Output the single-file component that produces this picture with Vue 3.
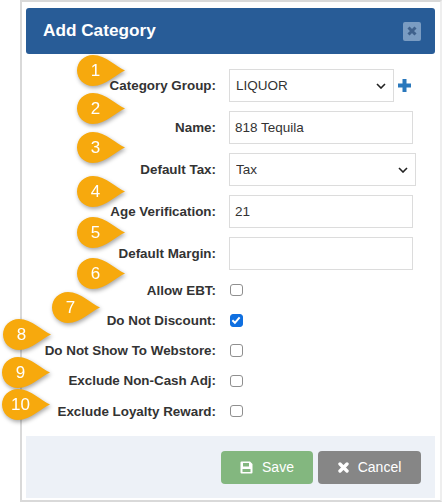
<script setup>
import { ref } from "vue";

const categoryGroup = ref("LIQUOR");
const name = ref("818 Tequila");
const defaultTax = ref("Tax");
const ageVerification = ref("21");
const defaultMargin = ref("");

const checks = ref([
  { label: "Allow EBT:", checked: false },
  { label: "Do Not Discount:", checked: true },
  { label: "Do Not Show To Webstore:", checked: false },
  { label: "Exclude Non-Cash Adj:", checked: false },
  { label: "Exclude Loyalty Reward:", checked: false },
]);

const callouts = [
  { n: 1, x: 75, y: 53 },
  { n: 2, x: 75, y: 91 },
  { n: 3, x: 75, y: 130 },
  { n: 4, x: 75, y: 174 },
  { n: 5, x: 75, y: 215 },
  { n: 6, x: 75, y: 256 },
  { n: 7, x: 50, y: 290 },
  { n: 8, x: 1, y: 317 },
  { n: 9, x: 0, y: 355 },
  { n: 10, x: 0, y: 387 },
];
</script>

<template>
  <div class="page">
    <div class="dialog">
      <div class="header">
        <h2>Add Category</h2>
        <button type="button" class="close">
          <svg width="10" height="10" viewBox="0 0 10 10"><path d="M1.500 1.500l7 7M8.500 1.500l-7 7" stroke="#3f618c" stroke-width="3" /></svg>
        </button>
      </div>

      <div class="body">
        <div class="row">
          <label>Category Group:</label>
          <select v-model="categoryGroup" class="sel-group"><option>LIQUOR</option></select>
          <svg class="plus" width="13" height="13" viewBox="0 0 13 13"><path d="M6.500 0v13M0 6.500h13" stroke="#2a78bc" stroke-width="4" /></svg>
        </div>
        <div class="row">
          <label>Name:</label>
          <input v-model="name" type="text" />
        </div>
        <div class="row">
          <label>Default Tax:</label>
          <select v-model="defaultTax" class="sel-tax"><option>Tax</option></select>
        </div>
        <div class="row">
          <label>Age Verification:</label>
          <input v-model="ageVerification" type="text" />
        </div>
        <div class="row">
          <label>Default Margin:</label>
          <input v-model="defaultMargin" type="text" />
        </div>

        <div class="checks">
          <div v-for="c in checks" :key="c.label" class="row-check">
            <label>{{ c.label }}</label>
            <span class="check" :class="{ on: c.checked }">
              <svg v-if="c.checked" width="10" height="10" viewBox="0 0 11 11"><path d="M1.500 5.800l2.800 2.800 5.200-6" fill="none" stroke="#fff" stroke-width="2.200" /></svg>
            </span>
          </div>
        </div>
      </div>

      <div class="footer">
        <button type="button" class="btn save">
          <svg width="13" height="13" viewBox="0 0 13 13"><path fill="#fff" fill-rule="evenodd" d="M1.500 0.500h8.500l2.500 2.500v8.500a1 1 0 0 1-1 1h-10a1 1 0 0 1-1-1v-10a1 1 0 0 1 1-1zM3 2v3.500h6V2zM2.500 8v3h8V8z" /></svg>
          Save
        </button>
        <button type="button" class="btn cancel">
          <svg width="11" height="11" viewBox="0 0 11 11"><path d="M2 2l7 7M9 2l-7 7" stroke="#fff" stroke-width="3.400" stroke-linecap="round" /></svg>
          Cancel
        </button>
      </div>
    </div>

    <div v-for="c in callouts" :key="c.n" class="callout" :style="{ left: c.x + 'px', top: c.y + 'px' }">
      <svg width="54" height="36" viewBox="0 0 54 36">
        <path d="M50 17.500C41 14 31 2 18 2 9 2 2 9 2 17.500S9 33 18 33c13 0 23-12 32-15.500z" fill="#f7a90d" />
      </svg>
      <span>{{ c.n }}</span>
    </div>
  </div>
</template>

<style scoped>
.page {
  position: relative;
  width: 442px;
  height: 502px;
  overflow: hidden;
  background: #fff;
  font-family: "Liberation Sans", Arial, sans-serif;
  padding: 8px 7px 0 26px;
  box-sizing: border-box;
}

.page::before {
  content: "";
  position: absolute;
  left: 20px;
  top: 0;
  right: 0;
  bottom: 0;
  border: 2px solid #d9d9d9;
  border-right-color: #eeeeee;
  pointer-events: none;
}

.dialog {
  background: #fff;
}

.header {
  height: 46px;
  background: #285c97;
  border-radius: 3px;
  display: flex;
  align-items: center;
  justify-content: space-between;
  padding: 0 14px 0 17px;
}

.header h2 {
  margin: 0 0 1px;
  color: #fff;
  font-size: 17.200px;
  font-weight: bold;
}

.close {
  width: 18px;
  height: 19px;
  padding: 0;
  border: none;
  border-radius: 2px;
  background: #7a9cc2;
  display: flex;
  align-items: center;
  justify-content: center;
}

.body {
  padding-top: 15px;
  height: 382px;
  box-sizing: border-box;
}

.row {
  display: flex;
  align-items: center;
  height: 33px;
  margin-bottom: 9px;
}

.row label,
.row-check label {
  width: 190px;
  flex: none;
  text-align: right;
  font-size: 13.400px;
  font-weight: bold;
  color: #333;
  margin-right: 13px;
  white-space: nowrap;
}

.row input,
.row select {
  height: 100%;
  box-sizing: border-box;
  border: 1px solid #dcdcdc;
  background-color: #fff;
  font-family: "Liberation Sans", Arial, sans-serif;
  font-size: 13.500px;
  color: #333;
  outline: none;
}

.row input {
  width: 184px;
  padding: 0 5px;
}

.row select {
  appearance: none;
  padding-left: 6px;
  background-image: url("data:image/svg+xml,%3Csvg xmlns='http://www.w3.org/2000/svg' width='10' height='6'%3E%3Cpath d='M1 1l4 4 4-4' fill='none' stroke='%23222' stroke-width='1.600'/%3E%3C/svg%3E");
  background-repeat: no-repeat;
  background-position: right 7px center;
}

.sel-group {
  width: 165px;
}

.sel-tax {
  width: 187px;
}

.plus {
  margin-left: 4px;
}

.checks {
  margin-top: -4px;
}

.row-check {
  display: flex;
  align-items: center;
  height: 30.250px;
}

.check {
  width: 12.500px;
  height: 12.500px;
  margin-left: 1px;
  box-sizing: border-box;
  border: 1px solid #8f8f8f;
  border-radius: 3px;
  background: #fff;
  display: flex;
  align-items: center;
  justify-content: center;
}

.check.on {
  background: #0f6fe0;
  border-color: #0f6fe0;
}

.footer {
  height: 62px;
  background: #edf1f7;
  display: flex;
  justify-content: flex-end;
  align-items: center;
  gap: 5px;
  padding-right: 14px;
  box-sizing: border-box;
}

.btn {
  height: 33px;
  border: none;
  border-radius: 4px;
  color: #fff;
  font-family: "Liberation Sans", Arial, sans-serif;
  font-size: 14px;
  display: flex;
  align-items: center;
  justify-content: center;
  gap: 9px;
}

.save {
  width: 92px;
  background: #83b77f;
}

.cancel {
  width: 103px;
  background: #868686;
}

.callout {
  position: absolute;
  width: 54px;
  height: 36px;
  filter: drop-shadow(1px 2px 2px rgba(0, 0, 0, 0.35));
}

.callout svg {
  display: block;
}

.callout span {
  position: absolute;
  left: 2px;
  top: 2px;
  width: 37px;
  height: 31px;
  line-height: 31px;
  text-align: center;
  color: #fff;
  font-size: 17px;
}
</style>
